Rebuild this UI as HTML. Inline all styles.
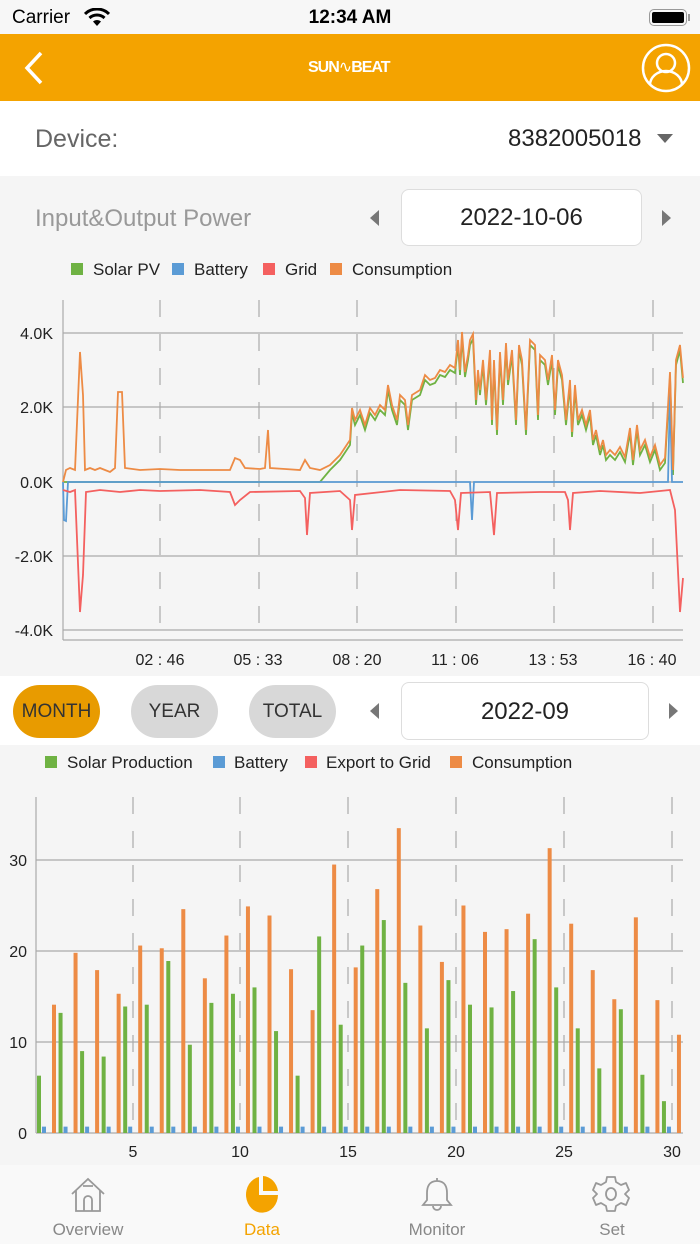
<!DOCTYPE html>
<html><head><meta charset="utf-8"><style>
*{margin:0;padding:0;box-sizing:border-box}
body{width:700px;height:1244px;overflow:hidden;font-family:"Liberation Sans",sans-serif;background:#f5f5f5;position:relative}
.abs{position:absolute}
</style></head><body>
<div class="abs" style="left:0;top:0;width:700px;height:34px;background:#f7f7f7"></div>
<div class="abs" style="left:12px;top:7px;font-size:19px;color:#000">Carrier</div>
<svg class="abs" style="left:84px;top:8px" width="26" height="19" viewBox="0 0 26 19"><path d="M1 6 A17 17 0 0 1 25 6" stroke="#000" stroke-width="3" fill="none"/><path d="M5.5 10 A11 11 0 0 1 20.5 10" stroke="#000" stroke-width="3" fill="none"/><path d="M13 18 L9 13.5 A6 6 0 0 1 17 13.5 Z" fill="#000"/></svg>
<div class="abs" style="left:0;width:700px;top:7px;text-align:center;font-size:19px;font-weight:bold">12:34 AM</div>
<div class="abs" style="left:649px;top:9px;width:38px;height:17px;border:1.5px solid #999;border-radius:5px;padding:2px"><div style="width:100%;height:100%;background:#000;border-radius:2px"></div></div>
<div class="abs" style="left:688px;top:14px;width:2px;height:7px;background:#999"></div>

<div class="abs" style="left:0;top:34px;width:700px;height:67px;background:#f4a300"></div>
<svg class="abs" style="left:22px;top:50px" width="24" height="36"><path d="M19 3 L5 18 L19 33" stroke="#fff" stroke-width="3.5" fill="none"/></svg>
<div class="abs" style="left:308px;top:57px;font-size:16px;font-weight:bold;color:#fff;letter-spacing:-1px">SUN<span style="font-weight:normal">∿</span>BEAT</div>
<svg class="abs" style="left:641px;top:43px" width="50" height="50"><circle cx="25" cy="25" r="23" stroke="#fff" stroke-width="2.5" fill="none"/><circle cx="25" cy="20" r="9" stroke="#fff" stroke-width="2.5" fill="none"/><path d="M9 42 A16 14 0 0 1 41 42" stroke="#fff" stroke-width="2.5" fill="none"/></svg>

<div class="abs" style="left:0;top:101px;width:700px;height:75px;background:#fff"></div>
<div class="abs" style="left:35px;top:125px;font-size:25px;color:#666">Device:</div>
<div class="abs" style="left:508px;top:125px;font-size:24px;color:#222">8382005018</div>
<svg class="abs" style="left:657px;top:134px" width="16" height="10"><path d="M0 0 L16 0 L8 9Z" fill="#666"/></svg>

<div class="abs" style="left:0;top:184px;width:700px;height:68px;background:#f5f5f5"></div>
<div class="abs" style="left:35px;top:205px;font-size:24px;color:#999">Input&amp;Output Power</div>
<svg class="abs" style="left:370px;top:210px" width="10" height="16"><path d="M9 0 L9 16 L0 8Z" fill="#777"/></svg>
<div class="abs" style="left:401px;top:189px;width:241px;height:57px;background:#fff;border:1px solid #ddd;border-radius:8px;text-align:center;line-height:56px;font-size:24px;color:#222">2022-10-06</div>
<svg class="abs" style="left:662px;top:210px" width="10" height="16"><path d="M0 0 L0 16 L9 8Z" fill="#777"/></svg>

<svg class="abs" style="left:0;top:252px" width="700" height="424" viewBox="0 252 700 424">
<rect x="0" y="252" width="700" height="424" fill="#f5f5f5"/>
<g font-size="17" fill="#222" font-family="Liberation Sans">
<rect x="71" y="263" width="12" height="12" fill="#6fb243"/><text x="93" y="275">Solar PV</text>
<rect x="172" y="263" width="12" height="12" fill="#5b9bd5"/><text x="194" y="275">Battery</text>
<rect x="263" y="263" width="12" height="12" fill="#f4605f"/><text x="285" y="275">Grid</text>
<rect x="330" y="263" width="12" height="12" fill="#ed8b45"/><text x="352" y="275">Consumption</text>
</g>
<g stroke="#aaa" stroke-width="1.2">
<line x1="63" y1="333" x2="683" y2="333"/><line x1="63" y1="407" x2="683" y2="407"/><line x1="63" y1="482" x2="683" y2="482"/><line x1="63" y1="556" x2="683" y2="556"/><line x1="63" y1="630" x2="683" y2="630"/>
<line x1="63" y1="300" x2="63" y2="640"/><line x1="63" y1="640" x2="683" y2="640"/>
</g>
<g stroke="#aaa" stroke-width="1.2" stroke-dasharray="17 17">
<line x1="160" y1="300" x2="160" y2="640"/><line x1="259" y1="300" x2="259" y2="640"/><line x1="357" y1="300" x2="357" y2="640"/><line x1="456" y1="300" x2="456" y2="640"/><line x1="554" y1="300" x2="554" y2="640"/><line x1="653" y1="300" x2="653" y2="640"/>
</g>
<g font-size="16" fill="#222" font-family="Liberation Sans" text-anchor="end">
<text x="53" y="339">4.0K</text><text x="53" y="413">2.0K</text><text x="53" y="488">0.0K</text><text x="53" y="562">-2.0K</text><text x="53" y="636">-4.0K</text>
</g>
<g font-size="16" fill="#222" font-family="Liberation Sans" text-anchor="middle">
<text x="160" y="665">02 : 46</text><text x="258" y="665">05 : 33</text><text x="357" y="665">08 : 20</text><text x="455" y="665">11 : 06</text><text x="553" y="665">13 : 53</text><text x="652" y="665">16 : 40</text>
</g>
<g id="lines" fill="none" stroke-width="1.8"></g>
</svg>

<div class="abs" style="left:0;top:676px;width:700px;height:69px;background:#fff"></div>
<div class="abs" style="left:13px;top:685px;width:87px;height:53px;border-radius:27px;background:#e89b00;text-align:center;line-height:53px;font-size:19px;color:#333">MONTH</div>
<div class="abs" style="left:131px;top:685px;width:87px;height:53px;border-radius:27px;background:#d8d8d8;text-align:center;line-height:53px;font-size:19px;color:#333">YEAR</div>
<div class="abs" style="left:249px;top:685px;width:87px;height:53px;border-radius:27px;background:#d8d8d8;text-align:center;line-height:53px;font-size:19px;color:#333">TOTAL</div>
<svg class="abs" style="left:370px;top:703px" width="10" height="16"><path d="M9 0 L9 16 L0 8Z" fill="#777"/></svg>
<div class="abs" style="left:401px;top:682px;width:248px;height:58px;background:#fff;border:1px solid #ddd;border-radius:8px;text-align:center;line-height:57px;font-size:24px;color:#222">2022-09</div>
<svg class="abs" style="left:669px;top:703px" width="10" height="16"><path d="M0 0 L0 16 L9 8Z" fill="#777"/></svg>

<svg class="abs" style="left:0;top:745px" width="700" height="420" viewBox="0 745 700 420">
<rect x="0" y="745" width="700" height="420" fill="#f5f5f5"/>
<g font-size="17" fill="#222" font-family="Liberation Sans">
<rect x="45" y="756" width="12" height="12" fill="#6fb243"/><text x="67" y="768">Solar Production</text>
<rect x="213" y="756" width="12" height="12" fill="#5b9bd5"/><text x="234" y="768">Battery</text>
<rect x="305" y="756" width="12" height="12" fill="#f4605f"/><text x="326" y="768">Export to Grid</text>
<rect x="450" y="756" width="12" height="12" fill="#ed8b45"/><text x="472" y="768">Consumption</text>
</g>
<g stroke="#aaa" stroke-width="1.2">
<line x1="36" y1="860" x2="683" y2="860"/><line x1="36" y1="951" x2="683" y2="951"/><line x1="36" y1="1042" x2="683" y2="1042"/><line x1="36" y1="1133" x2="683" y2="1133"/><line x1="36" y1="797" x2="36" y2="1133"/>
</g>
<g stroke="#aaa" stroke-width="1.2" stroke-dasharray="17 17">
<line x1="133" y1="797" x2="133" y2="1133"/><line x1="240" y1="797" x2="240" y2="1133"/><line x1="348" y1="797" x2="348" y2="1133"/><line x1="456" y1="797" x2="456" y2="1133"/><line x1="564" y1="797" x2="564" y2="1133"/><line x1="672" y1="797" x2="672" y2="1133"/>
</g>
<g font-size="16" fill="#222" font-family="Liberation Sans" text-anchor="end">
<text x="27" y="866">30</text><text x="27" y="957">20</text><text x="27" y="1048">10</text><text x="27" y="1139">0</text>
</g>
<g font-size="16" fill="#222" font-family="Liberation Sans" text-anchor="middle">
<text x="133" y="1157">5</text><text x="240" y="1157">10</text><text x="348" y="1157">15</text><text x="456" y="1157">20</text><text x="564" y="1157">25</text><text x="672" y="1157">30</text>
</g>
<g id="bars"></g>
</svg>

<div class="abs" style="left:0;top:1165px;width:700px;height:79px;background:#f9f9f9"></div>
<svg class="abs" style="left:69px;top:1175px" width="38" height="38" viewBox="0 0 38 38"><path d="M3 19 L19 4 L35 19 M7 15 V36 H31 V15 M14 11 H24 M15 36 V25 A4 4 0 0 1 23 25 V36" stroke="#999" stroke-width="1.8" fill="none"/></svg>
<svg class="abs" style="left:244px;top:1175px" width="36" height="38" viewBox="0 0 36 38"><path d="M15 2 A16 18 0 1 0 34 20 H15 Z" fill="#f4a300"/><path d="M19 1 A16 18 0 0 1 34 16 H19 Z" fill="#f4a300"/></svg>
<svg class="abs" style="left:419px;top:1175px" width="36" height="38" viewBox="0 0 36 38"><path d="M18 3 V6 M18 6 C10 6 8 12 8 18 V25 L4 30 H32 L28 25 V18 C28 12 26 6 18 6 M14 31 A4 4 0 0 0 22 31" stroke="#999" stroke-width="1.8" fill="none"/></svg>
<svg class="abs" style="left:592px;top:1175px" width="38" height="38" viewBox="0 0 38 38"><path d="M15 2 H23 L24 7 L29 10 L34 8 L37 15 L33 19 L37 23 L34 30 L29 28 L24 31 L23 36 H15 L14 31 L9 28 L4 30 L1 23 L5 19 L1 15 L4 8 L9 10 L14 7 Z" stroke="#999" stroke-width="1.8" fill="none" stroke-linejoin="round"/><ellipse cx="19" cy="19" rx="5" ry="6" stroke="#999" stroke-width="1.8" fill="none"/></svg>
<div class="abs" style="left:38px;top:1220px;width:100px;text-align:center;font-size:17px;color:#888">Overview</div>
<div class="abs" style="left:212px;top:1220px;width:100px;text-align:center;font-size:17px;color:#f4a300">Data</div>
<div class="abs" style="left:387px;top:1220px;width:100px;text-align:center;font-size:17px;color:#888">Monitor</div>
<div class="abs" style="left:562px;top:1220px;width:100px;text-align:center;font-size:17px;color:#888">Set</div>

<script>
var ns="http://www.w3.org/2000/svg";
var g=[6.3,13.2,9.0,8.4,13.9,14.1,18.9,9.7,14.3,15.3,16.0,11.2,6.3,21.6,11.9,20.6,23.4,16.5,11.5,16.8,14.1,13.8,15.6,21.3,16.0,11.5,7.1,13.6,6.4,3.5];
var o=[14.1,19.8,17.9,15.3,20.6,20.3,24.6,17.0,21.7,24.9,23.9,18.0,13.5,29.5,18.2,26.8,33.5,22.8,18.8,25.0,22.1,22.4,24.1,31.3,23.0,17.9,14.7,23.7,14.6,10.8];
var b=document.getElementById("bars"),s="";
for(var i=0;i<30;i++){var c=47+i*21.55;
s+='<rect x="'+(c-10)+'" y="'+(1133-g[i]*9.1)+'" width="4" height="'+g[i]*9.1+'" fill="#6fb243"/>';
s+='<rect x="'+(c-5)+'" y="'+(1133-0.7*9.1)+'" width="4" height="'+0.7*9.1+'" fill="#5b9bd5"/>';
s+='<rect x="'+(c+5)+'" y="'+(1133-o[i]*9.1)+'" width="4" height="'+o[i]*9.1+'" fill="#ed8b45"/>';}
b.innerHTML=s;
var op="63,482 66,470 70,468 75,470 80,352 83,395 85,470 90,468 95,470 100,468 105,470 110,472 115,468 118,392 122,392 125,468 140,470 160,469 180,470 200,470 220,470 230,470 235,458 240,460 245,468 260,469 265,468 268,430 270,468 285,469 300,470 305,460 310,468 320,470 330,465 340,455 350,440 352,408 355,420 360,410 365,425 370,408 375,415 380,405 385,410 388,385 392,405 397,420 400,395 405,400 408,425 412,395 420,390 425,375 430,380 435,378 440,370 445,372 450,365 455,368 458,340 460,370 462,332 465,372 468,355 470,340 473,334 476,400 478,370 480,390 483,360 486,400 490,350 492,420 494,360 497,430 500,352 503,400 506,343 508,380 512,350 516,420 519,345 522,360 526,430 530,340 535,345 538,415 540,355 545,360 548,380 552,355 555,410 558,360 562,375 566,420 570,380 572,432 575,385 578,420 582,410 586,425 590,410 593,440 596,430 600,450 603,440 606,455 610,450 615,455 620,447 625,457 630,428 633,460 637,425 640,450 645,440 650,457 655,445 660,465 665,458 670,372 673,470 676,360 680,345 683,378";
var gp="63,482 320,482 "+op.split(" ").filter(function(p){return +p.split(",")[0]>325}).map(function(p){var a=p.split(",");return a[0]+","+(Math.min(482,+a[1]+5))}).join(" ");
var rp="63,490 70,492 75,490 80,612 83,575 86,492 100,490 120,492 140,490 160,491 200,490 230,492 235,505 240,500 250,492 300,491 305,498 307,535 310,493 340,491 350,500 352,530 355,495 400,490 450,491 455,500 458,530 461,493 490,492 494,535 497,493 540,492 565,492 568,500 570,530 573,493 600,491 640,493 660,491 670,490 675,510 680,612 683,578";
var bp="63,482 64,520 66,521 68,482 470,482 472,520 474,482 668,482 670,392 672,482 683,482";
document.getElementById("lines").innerHTML='<polyline points="'+gp+'" stroke="#6fb243"/><polyline points="'+bp+'" stroke="#5b9bd5"/><polyline points="'+rp+'" stroke="#f4605f"/><polyline points="'+op+'" stroke="#ed8b45"/>';
</script>
</body></html>
